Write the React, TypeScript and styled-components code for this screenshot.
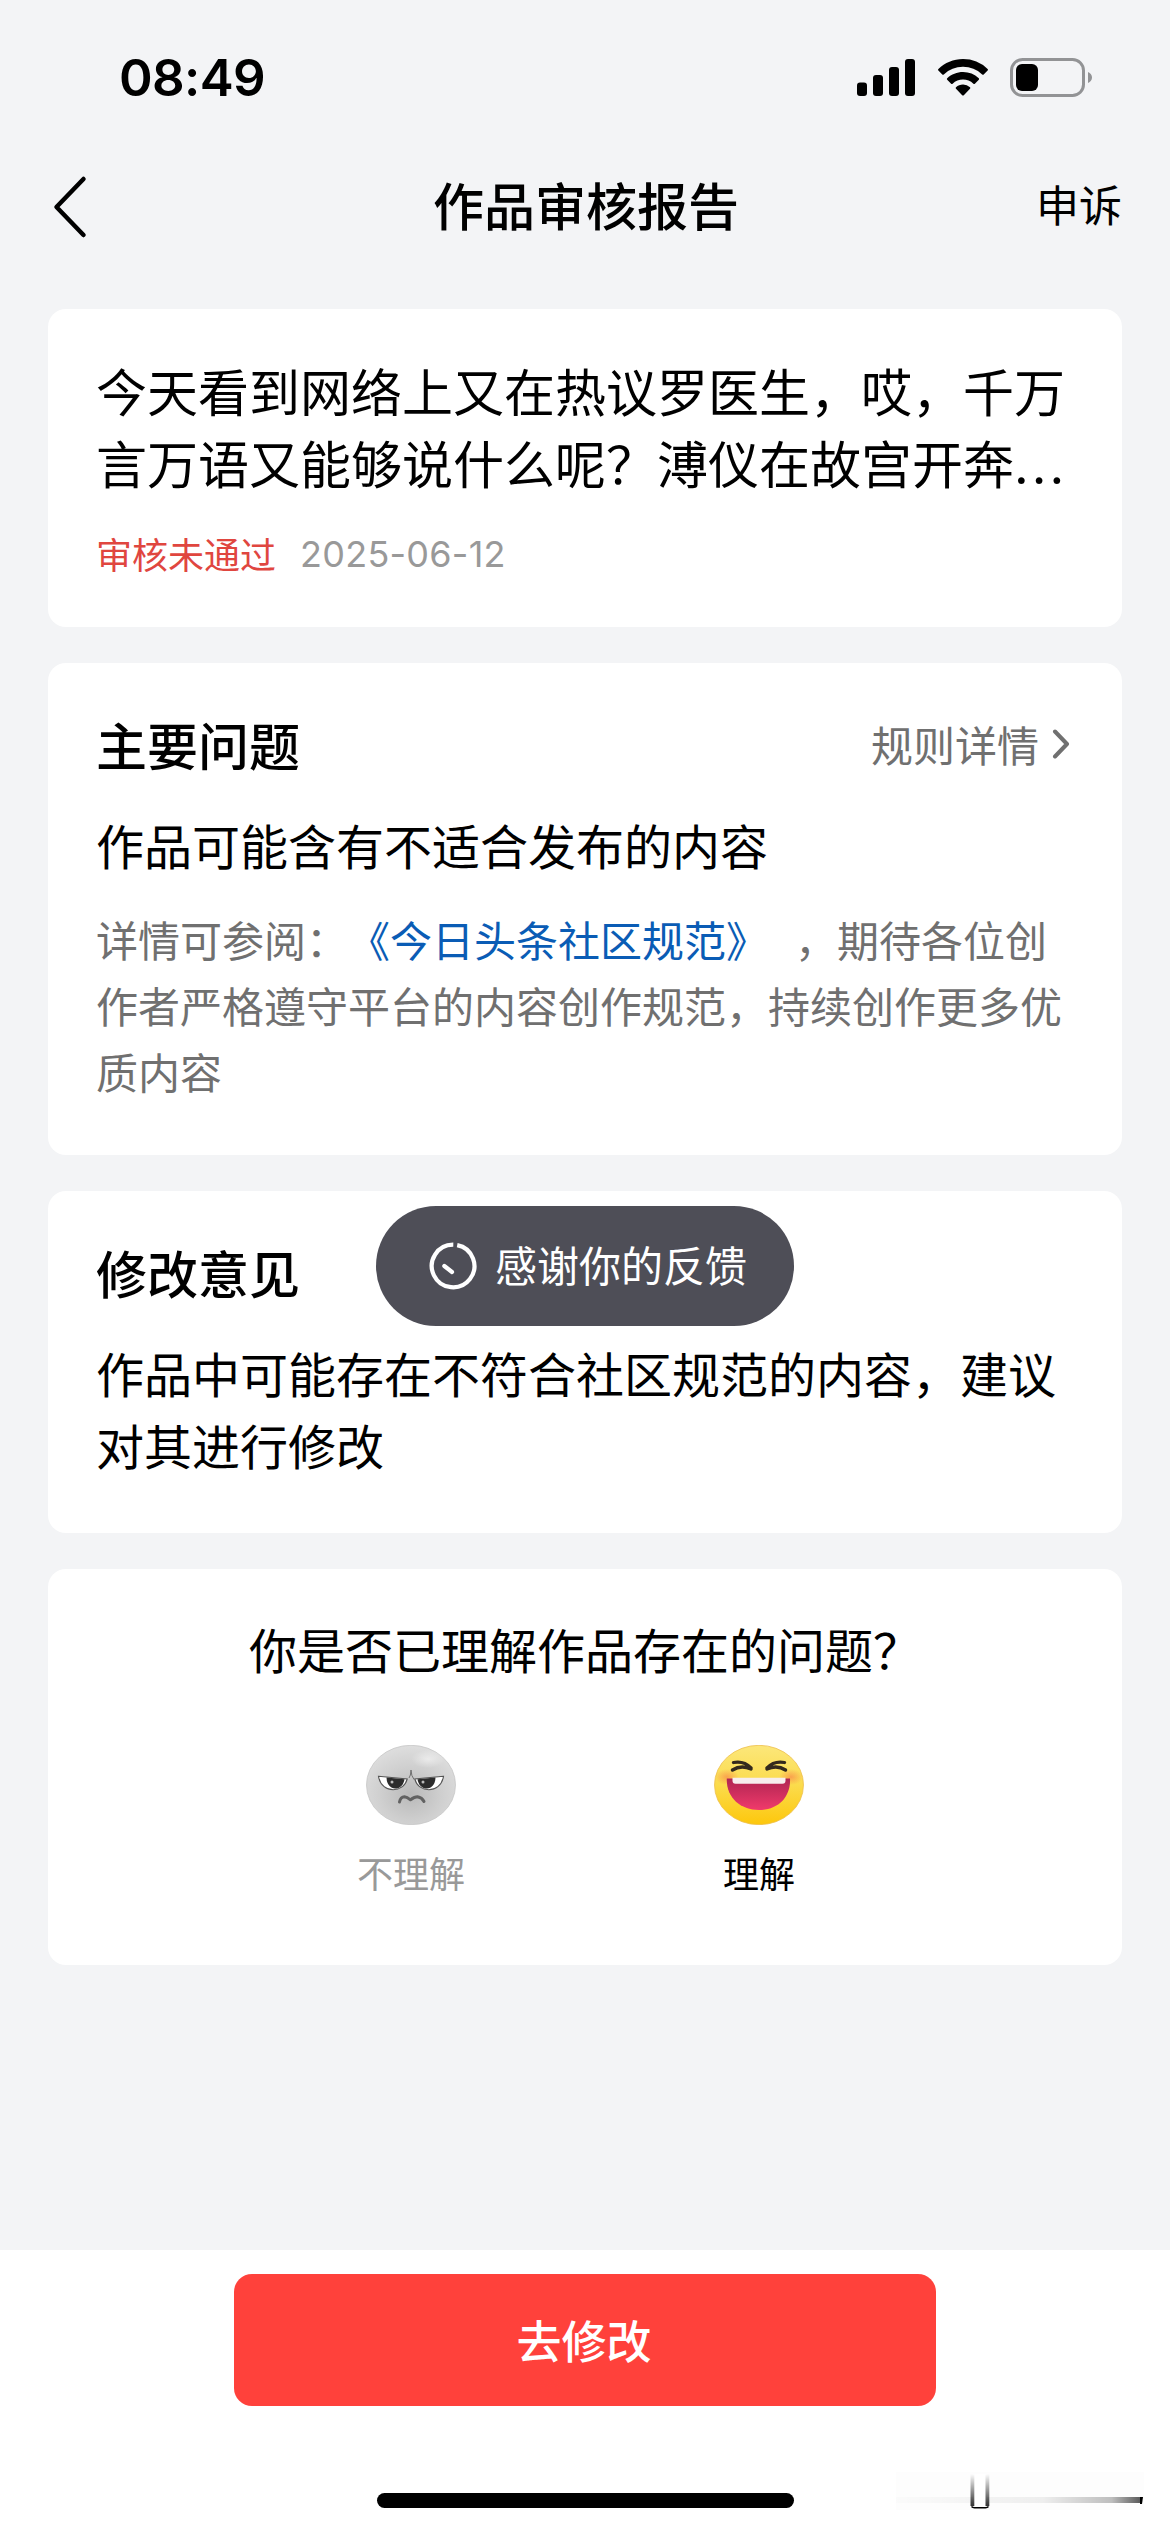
import React from "react";
import styled, { createGlobalStyle } from "styled-components";

const GlobalStyle = createGlobalStyle`
  * { box-sizing: border-box; }
  body { margin: 0; background: #f3f4f6; }
`;

const Screen = styled.div`
  position: relative;
  width: 1170px;
  height: 2532px;
  display: flex;
  flex-direction: column;
  overflow: hidden;
  background: #f3f4f6;
  color: #000;
  font-family: "Noto Sans CJK SC", "Noto Sans", sans-serif;
  text-spacing-trim: space-all;
`;

const StatusBar = styled.header`
  height: 141px;
  flex: none;
  display: flex;
  justify-content: space-between;
  padding: 48px 77px 0 119px;
`;

const Time = styled.time`
  font: 600 51px/60px Inter, sans-serif;
  letter-spacing: -0.6px;
`;

const StatusIcons = styled.div`
  display: flex;
  height: 60px;
  align-items: center;
`;

const NavBar = styled.nav`
  height: 132px;
  flex: none;
  display: grid;
  grid-template-columns: 1fr auto 1fr;
  align-items: center;
  padding: 0 48px 0 50px;
`;

const NavTitle = styled.h1`
  margin: 0;
  padding-bottom: 7px;
  font-size: 51px;
  line-height: 72px;
  font-weight: 500;
`;

const NavAction = styled.span`
  justify-self: end;
  padding-bottom: 8px;
  font-size: 43px;
  line-height: 60px;
`;

const CardList = styled.main`
  flex: 1;
  display: flex;
  flex-direction: column;
  gap: 36px;
  padding: 36px 48px 0;
`;

const Card = styled.section<{ $height: number; $top?: number }>`
  height: ${(p) => p.$height}px;
  padding: ${(p) => p.$top ?? 45}px 48px 0;
  border-radius: 18px;
  background: #fff;
`;

const PostText = styled.p`
  margin: 0;
  font-size: 51px;
  line-height: 72px;
  white-space: nowrap;
`;

const Ellipsis = styled.span`
  font-family: Inter, sans-serif;
  letter-spacing: 3px;
`;

const Meta = styled.div`
  display: flex;
  gap: 24px;
  margin-top: 24px;
  font-size: 36px;
  line-height: 54px;
  color: #999;
`;

const Rejected = styled.span`
  color: #e0463f;
`;

const DateText = styled.span`
  padding-top: 1px;
  font-family: Inter, sans-serif;
  letter-spacing: 0.25px;
`;

const CardHeader = styled.div`
  display: flex;
  justify-content: space-between;
  align-items: center;
  height: 72px;
`;

const CardTitle = styled.h2`
  margin: 0;
  font-size: 51px;
  line-height: 72px;
  font-weight: 500;
`;

const RulesLink = styled.span`
  display: flex;
  align-items: center;
  gap: 13px;
  padding-right: 4px;
  font-size: 42px;
  line-height: 60px;
  color: #707070;
`;

const BodyText = styled.p<{ $mt: number }>`
  margin: ${(p) => p.$mt}px 0 0;
  font-size: 48px;
  line-height: 72px;
`;

const Detail = styled.p`
  margin: 26px 0 0;
  font-size: 42px;
  line-height: 66px;
  color: #707070;
`;

const DocLink = styled.span`
  margin-right: 27px;
  color: #0a5cb5;
`;

const Question = styled.p`
  margin: 0;
  text-align: center;
  font-size: 48px;
  line-height: 72px;
`;

const Choices = styled.div`
  display: flex;
  justify-content: center;
  gap: 228px;
  margin-top: 61px;
`;

const Choice = styled.div<{ $active?: boolean }>`
  width: 120px;
  display: flex;
  flex-direction: column;
  align-items: center;
  gap: 20px;
  white-space: nowrap;
  font-size: 36px;
  line-height: 54px;
  color: ${(p) => (p.$active ? "#000" : "#999")};
`;

const Toast = styled.div`
  position: absolute;
  left: 376px;
  top: 1206px;
  width: 418px;
  height: 120px;
  display: flex;
  align-items: center;
  gap: 18px;
  padding-left: 53px;
  border-radius: 60px;
  background: #4e4e57;
  color: #fff;
  font-size: 42px;
  line-height: 60px;
  white-space: nowrap;
`;

const ToastText = styled.span`
  padding-bottom: 5px;
`;

const Footer = styled.footer`
  height: 282px;
  flex: none;
  display: flex;
  flex-direction: column;
  align-items: center;
  padding-top: 24px;
  background: #fff;
`;

const PrimaryButton = styled.button`
  width: 702px;
  height: 132px;
  padding: 0 2px 1px 0;
  border: 0;
  border-radius: 18px;
  background: #ff413b;
  color: #fff;
  font: 500 45px/66px "Noto Sans CJK SC", sans-serif;
`;

const HomeIndicator = styled.div`
  width: 417px;
  height: 15px;
  margin-top: 87px;
  border-radius: 8px;
  background: #000;
`;

const Smudge = styled.svg`
  position: absolute;
  left: 896px;
  top: 2472px;
`;

const SignalIcon = () => (
  <svg width="58" height="38" viewBox="0 0 58 38">
    <rect x="0" y="23.5" width="10" height="13.5" rx="3" />
    <rect x="16" y="16" width="10" height="21" rx="3" />
    <rect x="32" y="8" width="10" height="29" rx="3" />
    <rect x="48" y="0" width="10" height="37" rx="3" />
  </svg>
);

const Wifi = styled.svg`
  margin-left: 23px;
`;

const WifiIcon = () => (
  <Wifi width="50" height="38" viewBox="0 0 50 38">
    <path d="M25 0C15.500 0 6.800 3.800.4 9.900q-.8.800 0 1.600L4.300 15.400q.7.700 1.500 0A28 28 0 0 1 25 7.800a28 28 0 0 1 19.200 7.600q.8.700 1.500 0l3.900-3.900q.8-.8 0-1.600A35.600 35.600 0 0 0 25 0Z" />
    <path d="M25 13c-6 0-11.600 2.300-15.800 6.200q-.8.800 0 1.600l3.900 3.900q.7.700 1.500 0a15.300 15.300 0 0 1 20.800 0q.8.700 1.500 0l3.900-3.900q.8-.8 0-1.600A23 23 0 0 0 25 13Z" />
    <path d="M25 25.600c-2.700 0-5.100 1-7 2.600q-.8.700 0 1.500l6.200 6.500q.8.800 1.600 0l6.200-6.500q.8-.8 0-1.500a10.500 10.500 0 0 0-7-2.600Z" />
  </Wifi>
);

const Battery = styled.svg`
  margin-left: 22px;
`;

const BatteryIcon = () => (
  <Battery width="83" height="40" viewBox="0 0 83 40">
    <rect x="1.500" y="1.500" width="72" height="36" rx="11" fill="none" stroke="#929395" strokeWidth="3" />
    <rect x="6" y="6" width="22" height="27" rx="6" />
    <path d="M78 14c2.500 1 4 3 4 5.500s-1.500 4.500-4 5.500Z" fill="#929395" />
  </Battery>
);

const BackIcon = () => (
  <svg width="38" height="64" viewBox="0 0 38 64" fill="none" stroke="#000" strokeWidth="4.500" strokeLinecap="round" strokeLinejoin="round">
    <path d="M33.500 4 6.500 32l27 28" />
  </svg>
);

const ChevronIcon = () => (
  <svg width="18" height="30" viewBox="0 0 18 30" fill="none" stroke="#707070" strokeWidth="4" strokeLinecap="round" strokeLinejoin="round">
    <path d="M3 2.500 15 15 3 27.500" />
  </svg>
);

const ToastIcon = () => (
  <svg width="48" height="48" viewBox="0 0 48 48" fill="none" stroke="#fff" strokeWidth="4.200">
    <path d="M28.200 3.100A21.300 21.300 0 1 1 24.300 2.700" />
    <path d="M15.300 24l7.700 6" strokeLinecap="round" />
  </svg>
);

const AngryFace = () => (
  <svg width="90" height="80" viewBox="0 0 90 80">
    <defs>
      <radialGradient id="grayFace" cx=".5" cy=".62" r=".62">
        <stop offset="0" stopColor="#b9b9b9" />
        <stop offset=".55" stopColor="#cfcfcf" />
        <stop offset="1" stopColor="#dedede" />
      </radialGradient>
      <radialGradient id="grayShine">
        <stop offset="0" stopColor="#fff" stopOpacity=".5" />
        <stop offset="1" stopColor="#fff" stopOpacity="0" />
      </radialGradient>
    </defs>
    <ellipse cx="45" cy="40" rx="44.500" ry="39.700" fill="url(#grayFace)" stroke="#c6c6c6" strokeWidth=".8" />
    <ellipse cx="62" cy="14" rx="17" ry="9" fill="url(#grayShine)" />
    <path d="M12.500 31.300 41.200 34c-2 7.500-8 10.700-14 10.700S14 41 12.500 31.300Z" fill="#fff" stroke="#555" strokeWidth="1.100" />
    <path d="M77.500 31.300 48.800 34c2 7.500 8 10.700 14 10.700S76 41 77.500 31.300Z" fill="#fff" stroke="#555" strokeWidth="1.100" />
    <path d="M20.600 32.500 38.500 34.200c-.8 5.600-4.500 9.300-9.300 9.300s-8.800-4.500-8.600-11Z" fill="#2c2c2c" />
    <path d="M69.400 32.500 51.500 34.200c.8 5.600 4.500 9.300 9.300 9.300s8.800-4.500 8.600-11Z" fill="#2c2c2c" />
    <circle cx="26" cy="37" r="1.500" fill="#bbb" />
    <circle cx="57" cy="37" r="1.500" fill="#bbb" />
    <path d="M45 25q.2 6 3 9.500M45 25q-.2 6-2 8" fill="none" stroke="#666" strokeWidth=".9" />
    <path d="M33.500 57q1-5 5-5.200 2.500.2 6 3 4-3 7-3 4.500.8 6.500 4.700" fill="none" stroke="#626262" strokeWidth="3" strokeLinecap="round" strokeLinejoin="round" />
  </svg>
);

const LaughFace = () => (
  <svg width="90" height="80" viewBox="0 0 90 80">
    <defs>
      <linearGradient id="sunFace" x1="0" y1="0" x2="0" y2="1">
        <stop offset="0" stopColor="#fce77a" />
        <stop offset=".5" stopColor="#fbdb4c" />
        <stop offset="1" stopColor="#fdc70c" />
      </linearGradient>
      <linearGradient id="mouth" x1="0" y1="0" x2="0" y2="1">
        <stop offset="0" stopColor="#b02552" />
        <stop offset="1" stopColor="#f03a6b" />
      </linearGradient>
      <radialGradient id="blush">
        <stop offset="0" stopColor="#f98a4a" stopOpacity=".7" />
        <stop offset="1" stopColor="#f98a4a" stopOpacity="0" />
      </radialGradient>
    </defs>
    <ellipse cx="45" cy="40" rx="44.500" ry="39.700" fill="url(#sunFace)" stroke="#eebf4e" strokeWidth=".8" />
    <ellipse cx="13" cy="32" rx="12" ry="8" fill="url(#blush)" />
    <ellipse cx="77" cy="32" rx="12" ry="8" fill="url(#blush)" />
    <path d="M12.800 33.500H76C77 52 64 65 45 65S12 52 12.800 33.500Z" fill="url(#mouth)" />
    <path d="M18.500 32.700H71.500v3q0 3-3 3H21.500q-3 0-3-3Z" fill="#f7eeee" />
    <path d="M19.500 17.500Q30 15.500 37 23M18.500 25Q27 19.500 37 24M70.500 17.500Q60 15.500 53 23M71.500 25Q63 19.500 53 24" fill="none" stroke="#33291d" strokeWidth="3.300" strokeLinecap="round" strokeLinejoin="round" />
  </svg>
);

export default function App() {
  return (
    <Screen>
      <GlobalStyle />
      <StatusBar>
        <Time>08:49</Time>
        <StatusIcons>
          <SignalIcon />
          <WifiIcon />
          <BatteryIcon />
        </StatusIcons>
      </StatusBar>
      <NavBar>
        <BackIcon />
        <NavTitle>作品审核报告</NavTitle>
        <NavAction>申诉</NavAction>
      </NavBar>
      <CardList>
        <Card $height={318}>
          <PostText>
            今天看到网络上又在热议罗医生，哎，千万
            <br />
            言万语又能够说什么呢？溥仪在故宫开奔<Ellipsis>...</Ellipsis>
          </PostText>
          <Meta>
            <Rejected>审核未通过</Rejected>
            <DateText>2025-06-12</DateText>
          </Meta>
        </Card>
        <Card $height={492}>
          <CardHeader>
            <CardTitle>主要问题</CardTitle>
            <RulesLink>
              规则详情
              <ChevronIcon />
            </RulesLink>
          </CardHeader>
          <BodyText $mt={28}>作品可能含有不适合发布的内容</BodyText>
          <Detail>
            详情可参阅：<DocLink>《今日头条社区规范》</DocLink>，期待各位创
            <br />
            作者严格遵守平台的内容创作规范，持续创作更多优质内容
          </Detail>
        </Card>
        <Card $height={342}>
          <CardTitle>修改意见</CardTitle>
          <BodyText $mt={28}>作品中可能存在不符合社区规范的内容，建议对其进行修改</BodyText>
        </Card>
        <Card $height={396} $top={43}>
          <Question>你是否已理解作品存在的问题？</Question>
          <Choices>
            <Choice>
              <AngryFace />
              不理解
            </Choice>
            <Choice $active>
              <LaughFace />
              理解
            </Choice>
          </Choices>
        </Card>
      </CardList>
      <Footer>
        <PrimaryButton>去修改</PrimaryButton>
        <HomeIndicator />
      </Footer>
      <Toast>
        <ToastIcon />
        <ToastText>感谢你的反馈</ToastText>
      </Toast>
      <Smudge width="248" height="40" viewBox="0 0 248 40">
        <defs>
          <linearGradient id="streak" x1="0" x2="1" y1="0" y2="0">
            <stop offset="0" stopColor="#000" stopOpacity=".01" />
            <stop offset=".6" stopColor="#000" stopOpacity=".06" />
            <stop offset=".88" stopColor="#000" stopOpacity=".25" />
            <stop offset="1" stopColor="#000" stopOpacity=".65" />
          </linearGradient>
          <linearGradient id="post" x1="0" x2="0" y1="0" y2="1">
            <stop offset="0" stopColor="#000" stopOpacity="0" />
            <stop offset="1" stopColor="#000" stopOpacity=".8" />
          </linearGradient>
        </defs>
        <rect width="248" height="38" fill="#fdfdfd" />
        <rect y="25" width="245" height="6" fill="url(#streak)" />
        <path d="M244 25h3l-1 7h-2Z" />
        <rect x="77" y="2" width="14" height="33" fill="#fff" />
        <rect x="74.500" y="2" width="3.800" height="32" fill="url(#post)" />
        <rect x="89.500" y="2" width="3.800" height="32" fill="url(#post)" />
        <path d="M75.500 34.500q1 1.200 3 1.200h11q2 0 3-1.200" fill="none" stroke="#000" strokeWidth="1.500" />
      </Smudge>
    </Screen>
  );
}
